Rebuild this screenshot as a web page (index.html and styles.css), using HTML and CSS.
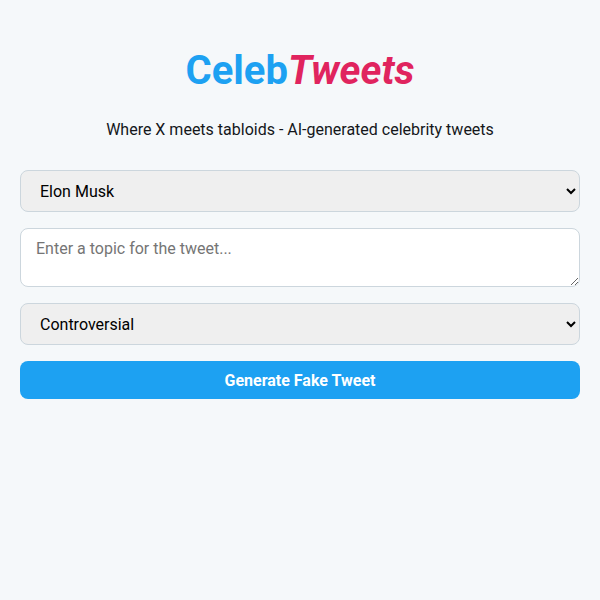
FILE: index.html
```html
<!DOCTYPE html>
<html>
<head>
<meta charset="utf-8">
<link rel="stylesheet" href="styles.css">
</head>
<body>
<div class="app">
  <header class="header">
    <h1 class="title"><span class="celeb">Celeb</span><span class="tweets">Tweets</span></h1>
    <p class="subtitle">Where X meets tabloids - AI-generated celebrity tweets</p>
  </header>
  <form class="form">
    <select class="field select">
      <option>Elon Musk</option>
    </select>
    <textarea class="field textarea" placeholder="Enter a topic for the tweet..."></textarea>
    <select class="field select">
      <option>Controversial</option>
    </select>
    <button type="button" class="button">Generate Fake Tweet</button>
  </form>
</div>
</body>
</html>
```
FILE: styles.css
```css
html, body {
  margin: 0;
  padding: 0;
  background: #f5f8fa;
  font-family: Roboto, "Noto Sans", sans-serif;
  color: #14171a;
}
.app {
  padding: 20px;
}
.header {
  text-align: center;
  padding-top: 27px;
}
.title {
  margin: 0;
  font-size: 40px;
  font-weight: 700;
  line-height: 47px;
}
.celeb { color: #1da1f2; }
.tweets { color: #e0245e; font-style: italic; }
.subtitle {
  margin: 26px 0 0;
  font-size: 16px;
  line-height: 20px;
}
.form {
  margin-top: 30px;
  display: flex;
  flex-direction: column;
  gap: 16px;
}
.field {
  font-family: Roboto, "Noto Sans", sans-serif;
  font-size: 16px;
  border: 1px solid #ccd6dd;
  border-radius: 8px;
  box-sizing: border-box;
  width: 100%;
}
.select {
  height: 42px;
  padding: 0 15px;
  background: #efefef;
  color: #000;
}
.textarea {
  height: 59px;
  padding: 10px 15px;
  background: #fff;
  resize: vertical;
}
.textarea::placeholder { color: #757575; }
.button {
  height: 38px;
  border: none;
  border-radius: 8px;
  background: #1da1f2;
  color: #fff;
  font-family: Roboto, "Noto Sans", sans-serif;
  font-size: 16px;
  font-weight: 700;
}
```
